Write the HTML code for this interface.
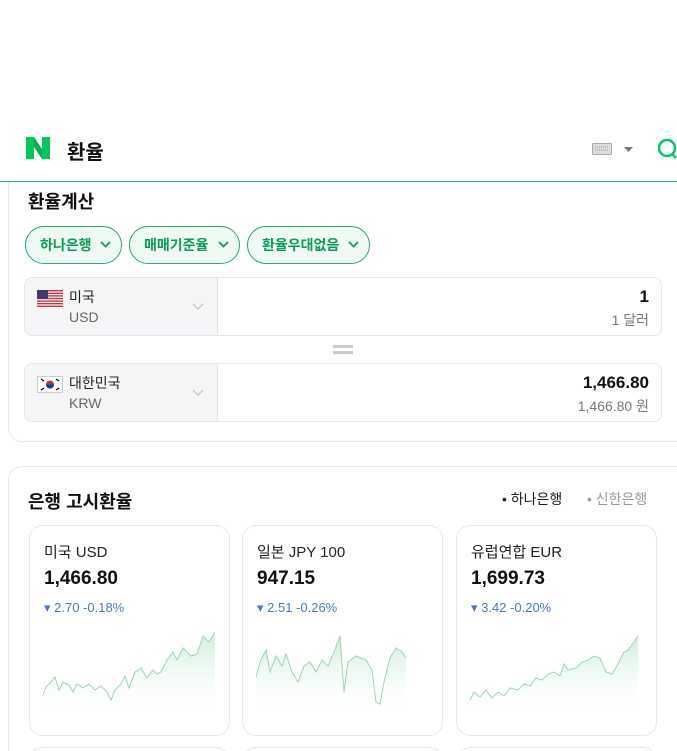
<!DOCTYPE html>
<html><head><meta charset="utf-8"><style>
*{margin:0;padding:0;box-sizing:border-box}
html,body{width:677px;height:751px;overflow:hidden}
body{background:#fff;font-family:"Liberation Sans","Noto Sans CJK KR",sans-serif;color:#111;position:relative}
.abs{position:absolute}
.hdr{top:125px;left:0;width:677px;height:57px;border-bottom:1px solid #1fb478;z-index:2;background:#fff}
.card{border:1px solid #e6e8eb;border-radius:14px;background:#fff}
.chip{top:226px;height:38px;border:1px solid #27a86c;border-radius:19px;background:#eefaf3;color:#099b57;font-size:14px;font-weight:bold;line-height:36px;padding-left:14px}
.chip svg{position:absolute;right:10px;top:14px}
.row{left:24px;width:638px;height:59px;border:1px solid #e4e6e9;border-radius:8px;overflow:hidden}
.row .l{position:absolute;left:0;top:0;width:193px;height:100%;background:#f4f5f7;border-right:1px solid #e4e6e9}
.nm{position:absolute;left:44px;top:9px;font-size:14px;color:#222}
.cd{position:absolute;left:44px;top:31px;font-size:14px;color:#666}
.v{position:absolute;right:12px;top:9px;font-size:17px;font-weight:bold}
.s{position:absolute;right:12px;top:32px;font-size:14px;color:#777}
.rc{top:525px;width:201px;height:211px}
.rc .t{position:absolute;left:14px;top:15px;font-size:15px;color:#222}
.rc .p{position:absolute;left:14px;top:42px;font-size:19px;font-weight:bold}
.rc .c{position:absolute;left:14px;top:74px;font-size:13px;color:#4c78c4}
.rc svg{position:absolute;left:13px;top:106px}
</style></head><body>
<div class="abs hdr">
 <svg class="abs" style="left:26px;top:12px" width="24" height="22" viewBox="0 0 24 22"><path d="M0 0h8l8 12V0h8v22h-8L8 10v12H0z" fill="#03c75a"/><path d="M8 0l8 12v10L8 10z" fill="#0aa14e" opacity=".6"/></svg>
 <div class="abs" style="left:67px;top:11px;font-size:20px;font-weight:bold">환율</div>
 <svg class="abs" style="left:592px;top:18px" width="20" height="12"><rect x="0.5" y="0.5" width="19" height="11" rx="1" fill="#ddd" stroke="#aaa"/><path d="M3 4h14M3 7h14" stroke="#999" stroke-dasharray="1 1"/></svg>
 <svg class="abs" style="left:624px;top:22px" width="9" height="6"><path d="M0 0h9L4.5 5z" fill="#777"/></svg>
 <svg class="abs" style="left:657px;top:13px" width="24" height="24"><circle cx="10" cy="10" r="8" fill="none" stroke="#03c75a" stroke-width="2.5"/><path d="M15 16l4 4" stroke="#03c75a" stroke-width="2.5"/></svg>
</div>
<div class="abs card" style="left:8px;top:170px;width:690px;height:272px;border-radius:0 0 14px 14px"></div>
<div class="abs" style="left:28px;top:188px;font-size:18px;font-weight:bold">환율계산</div>
<div class="abs chip" style="left:25px;width:97px">하나은행<svg width="11" height="8"><path d="M1 1l4.5 4.5L10 1" stroke="#099b57" stroke-width="1.8" fill="none"/></svg></div>
<div class="abs chip" style="left:129px;width:111px">매매기준율<svg width="11" height="8"><path d="M1 1l4.5 4.5L10 1" stroke="#099b57" stroke-width="1.8" fill="none"/></svg></div>
<div class="abs chip" style="left:247px;width:123px">환율우대없음<svg width="11" height="8"><path d="M1 1l4.5 4.5L10 1" stroke="#099b57" stroke-width="1.8" fill="none"/></svg></div>
<div class="abs row" style="top:277px"><div class="l">
 <svg style="position:absolute;left:12px;top:12px" width="26" height="17"><rect width="26" height="17" fill="#fff"/><g fill="#c8313e"><rect y="0" width="26" height="1.4"/><rect y="2.6" width="26" height="1.4"/><rect y="5.2" width="26" height="1.4"/><rect y="7.8" width="26" height="1.4"/><rect y="10.4" width="26" height="1.4"/><rect y="13" width="26" height="1.4"/><rect y="15.6" width="26" height="1.4"/></g><rect width="11" height="9" fill="#3c3b6e"/></svg>
 <div class="nm">미국</div><div class="cd">USD</div>
 <svg style="position:absolute;left:167px;top:25px" width="12" height="7"><path d="M1 1l5 5 5-5" stroke="#bbb" fill="none"/></svg>
</div><div class="v">1</div><div class="s">1 달러</div></div>
<div class="abs" style="left:333px;top:345px;width:20px;height:3px;background:#ccc"></div>
<div class="abs" style="left:333px;top:351px;width:20px;height:3px;background:#ccc"></div>
<div class="abs row" style="top:363px"><div class="l">
 <svg style="position:absolute;left:12px;top:12px" width="26" height="17"><rect x=".5" y=".5" width="25" height="16" fill="#fff" stroke="#ccc"/><circle cx="13" cy="8.5" r="4" fill="#cd2e3a"/><path d="M9 8.5a4 4 0 0 0 8 0z" fill="#0047a0"/><g stroke="#000" stroke-width="1.3"><path d="M4 3l3 2M19 3l3 2M4 14l3-2M19 14l3-2"/></g></svg>
 <div class="nm">대한민국</div><div class="cd">KRW</div>
 <svg style="position:absolute;left:167px;top:25px" width="12" height="7"><path d="M1 1l5 5 5-5" stroke="#bbb" fill="none"/></svg>
</div><div class="v">1,466.80</div><div class="s">1,466.80 원</div></div>

<div class="abs card" style="left:8px;top:466px;width:690px;height:300px"></div>
<div class="abs" style="left:28px;top:488px;font-size:18px;font-weight:bold">은행 고시환율</div>
<div class="abs" style="left:502px;top:489px;font-size:14px;color:#222">• 하나은행</div>
<div class="abs" style="left:587px;top:489px;font-size:14px;color:#999">• 신한은행</div>
<svg width="0" height="0" style="position:absolute"><defs><linearGradient id="g" x1="0" y1="0" x2="0" y2="1"><stop offset="0" stop-color="#bfe8cf" stop-opacity=".8"/><stop offset="1" stop-color="#fff" stop-opacity="0"/></linearGradient></defs></svg>
<div class="abs card rc" style="left:29px"><div class="t">미국 USD</div><div class="p">1,466.80</div><div class="c">▾ 2.70 -0.18%</div>
<svg width="172" height="84" viewBox="0 0 172 84"><path d="M0 63L3 55 8 50 12 45 16 58 20 50 26 53 30 60 34 52 40 56 46 52 52 58 58 54 64 60 68 68 72 58 78 52 82 44 86 56 92 40 98 36 104 46 110 38 114 42 118 40 124 28 130 20 134 28 140 16 148 24 154 22 160 4 166 10 172 0V84H0z" fill="url(#g)"/><path d="M0 63L3 55 8 50 12 45 16 58 20 50 26 53 30 60 34 52 40 56 46 52 52 58 58 54 64 60 68 68 72 58 78 52 82 44 86 56 92 40 98 36 104 46 110 38 114 42 118 40 124 28 130 20 134 28 140 16 148 24 154 22 160 4 166 10 172 0" fill="none" stroke="#9bd6b1" stroke-width="1"/></svg></div>
<div class="abs card rc" style="left:242px"><div class="t">일본 JPY 100</div><div class="p">947.15</div><div class="c">▾ 2.51 -0.26%</div>
<svg width="172" height="84" viewBox="0 0 172 84"><path d="M0 45L4 30 10 18 14 40 20 24 26 34 30 22 36 40 42 50 48 34 54 30 60 40 66 28 72 34 78 20 84 4 88 60 92 30 100 24 110 28 116 38 120 70 124 72 128 50 134 26 140 16 146 20 150 26V84H0z" fill="url(#g)"/><path d="M0 45L4 30 10 18 14 40 20 24 26 34 30 22 36 40 42 50 48 34 54 30 60 40 66 28 72 34 78 20 84 4 88 60 92 30 100 24 110 28 116 38 120 70 124 72 128 50 134 26 140 16 146 20 150 26" fill="none" stroke="#9bd6b1" stroke-width="1"/></svg></div>
<div class="abs card rc" style="left:456px"><div class="t">유럽연합 EUR</div><div class="p">1,699.73</div><div class="c">▾ 3.42 -0.20%</div>
<svg width="172" height="84" viewBox="0 0 172 84"><path d="M0 68L4 60 10 65 16 58 22 66 28 60 34 64 40 56 48 58 54 52 60 54 66 46 72 48 78 42 84 40 90 44 94 32 98 38 106 36 112 30 118 28 124 24 130 26 136 40 142 42 148 32 154 20 158 18 164 10 168 4V84H0z" fill="url(#g)"/><path d="M0 68L4 60 10 65 16 58 22 66 28 60 34 64 40 56 48 58 54 52 60 54 66 46 72 48 78 42 84 40 90 44 94 32 98 38 106 36 112 30 118 28 124 24 130 26 136 40 142 42 148 32 154 20 158 18 164 10 168 4" fill="none" stroke="#9bd6b1" stroke-width="1"/></svg></div>
<div class="abs card" style="left:29px;top:747px;width:201px;height:30px"></div>
<div class="abs card" style="left:242px;top:747px;width:201px;height:30px"></div>
<div class="abs card" style="left:456px;top:747px;width:201px;height:30px"></div>
</body></html>
